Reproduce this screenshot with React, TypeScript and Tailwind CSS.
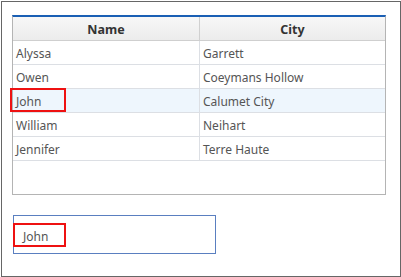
const rows = [
  { name: 'Alyssa', city: 'Garrett' },
  { name: 'Owen', city: 'Coeymans Hollow' },
  { name: 'John', city: 'Calumet City' },
  { name: 'William', city: 'Neihart' },
  { name: 'Jennifer', city: 'Terre Haute' },
];

export default function App() {
  return (
    <div className="w-[401px] h-[277px] bg-white pl-[1px] pt-[1px] font-['Noto_Sans',sans-serif]">
      <div className="relative w-[400px] h-[276px] border border-[#666] pl-[10px] pt-[13px]">
        {/* grid */}
        <div className="w-[374px] h-[180px] border-x border-b border-t-2 border-x-[#b4b4b4] border-b-[#b4b4b4] border-t-[#1a5fb4] bg-white">
          <div className="flex h-[24px] border-b border-[#cfcfcf] bg-gradient-to-b from-[#f7f7f7] to-[#ececec] text-[12.5px] font-bold text-[#333]">
            <div className="w-[187px] border-r border-[#d0d0d0] flex items-center justify-center pt-[3px]">Name</div>
            <div className="flex-1 flex items-center justify-center pt-[3px]">City</div>
          </div>
          {rows.map((r, i) => (
            <div
              key={r.name}
              className={`flex h-[24px] border-b border-[#dcdfe4] text-[12px] text-[#555] ${i === 2 ? 'bg-[#eef6fd]' : 'bg-white'}`}
            >
              <div className="w-[187px] border-r border-[#dcdfe4] flex items-center pl-[3px] pt-[3px]">{r.name}</div>
              <div className="flex-1 flex items-center pl-[3px] pt-[3px]">{r.city}</div>
            </div>
          ))}
        </div>

        {/* input */}
        <div className="mt-[20px] ml-[1px] w-[203px] h-[39px] border border-[#5a7fc0] flex items-center pl-[9px] pt-[4px] text-[12px] text-[#555]">
          John
        </div>

        {/* highlight overlays */}
        <div className="absolute left-[8px] top-[86px] w-[56px] h-[24px] border-2 border-[#ee1111]" />
        <div className="absolute left-[11px] top-[221px] w-[53px] h-[24px] border-2 border-[#ee1111]" />
      </div>
    </div>
  );
}
